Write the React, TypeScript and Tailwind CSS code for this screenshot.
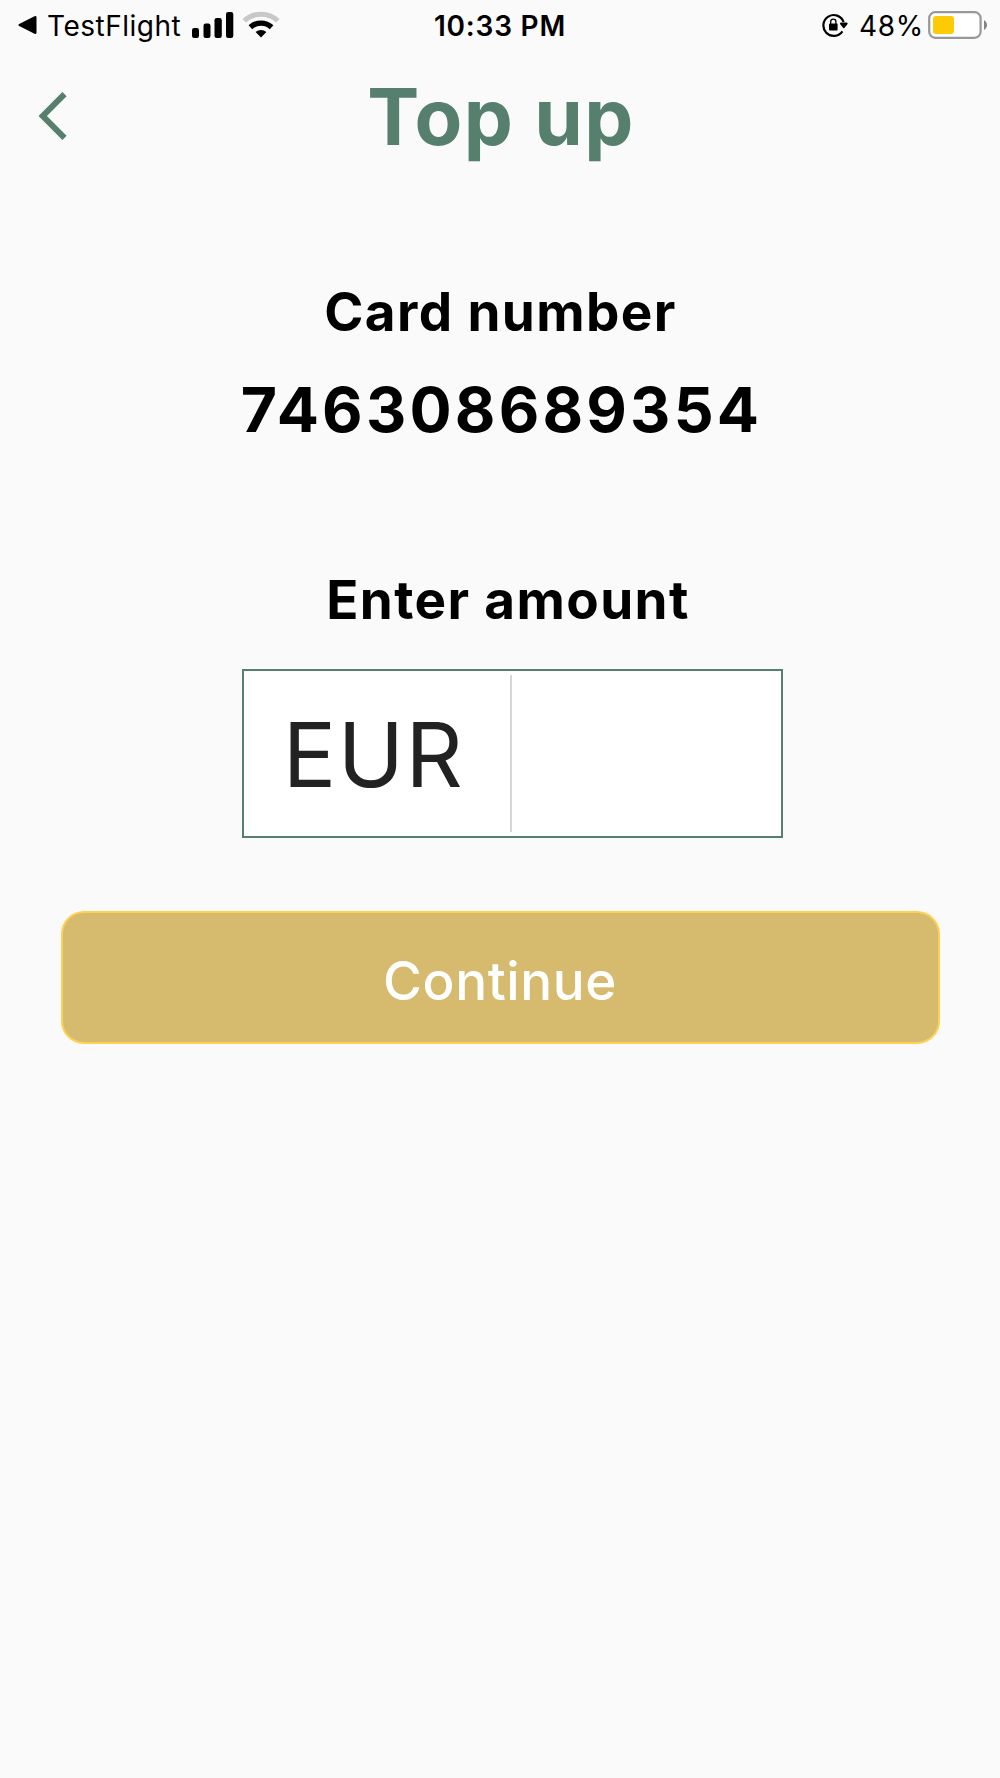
function SignalIcon() {
  return (
    <svg width="42" height="26" viewBox="0 0 42 26" className="ml-[11px]">
      <rect x="0" y="16" width="7" height="10" rx="2.2" />
      <rect x="11.5" y="11.5" width="7" height="14.5" rx="2.2" />
      <rect x="22.5" y="6" width="7.3" height="20" rx="2.2" />
      <rect x="34" y="0" width="7.3" height="26" rx="2.2" />
    </svg>
  );
}

function WifiIcon() {
  return (
    <svg width="38" height="28" viewBox="0 0 38 28" fill="none" className="ml-[8px]">
      <path d="M2.2 9.8C11.4 0.9 26.6 0.9 35.8 9.8" stroke="#c8c8c9" strokeWidth="5" />
      <path d="M8.4 16.2C14.3 10.8 23.7 10.8 29.6 16.2" stroke="#000" strokeWidth="5.4" />
      <path d="M13.6 21C16.8 18.2 21.2 18.2 24.4 21L19 26.6Z" fill="#000" />
    </svg>
  );
}

function RotationLockIcon() {
  return (
    <svg width="26" height="24" viewBox="0 0 26 24" fill="none">
      <path d="M20.4 18.3A10.4 10.4 0 1 1 21.6 9" stroke="#000" strokeWidth="2.2" />
      <path d="M19 10.6H24.6L21.8 14.2Z" fill="#000" stroke="#000" strokeWidth="2" strokeLinejoin="round" />
      <rect x="7" y="10.4" width="8.6" height="7.2" rx="1" fill="#000" />
      <path d="M8.7 11V8.7a2.6 2.6 0 0 1 5.2 0V11" stroke="#000" strokeWidth="1.3" />
    </svg>
  );
}

function BatteryIcon() {
  return (
    <svg width="60" height="28" viewBox="0 0 60 28" fill="none" className="ml-[4px]">
      <rect x="1.2" y="1.2" width="51.4" height="25.6" rx="6" fill="#fff" stroke="#989898" strokeWidth="2.2" />
      <rect x="5" y="5" width="21" height="18" rx="3" fill="#fdcb05" />
      <path d="M56 9C57.8 10.2 59 12 59 14S57.8 17.8 56 19Z" fill="#838383" />
    </svg>
  );
}

function StatusBar() {
  return (
    <div className="grid h-[50px] grid-cols-3 items-center text-[28px] leading-[30px]">
      <div className="flex items-center pl-[18px]">
        <svg width="19" height="18" viewBox="0 0 19 18">
          <path d="M1.2 8 16.5 0.3Q18.5 -0.4 18.5 1.5V16.5Q18.5 18.4 16.5 17.7L1.2 10Q-0.5 9 1.2 8Z" />
        </svg>
        <span className="ml-[10px] pt-px tracking-[0.5px]">TestFlight</span>
        <SignalIcon />
        <WifiIcon />
      </div>
      <span className="pt-px text-center font-semibold tracking-[0.8px]">10:33 PM</span>
      <div className="flex items-center justify-end pr-[12px]">
        <RotationLockIcon />
        <span className="ml-[11px] pt-px tracking-[0.7px]">48%</span>
        <BatteryIcon />
      </div>
    </div>
  );
}

function Header() {
  return (
    <header className="grid h-[132px] grid-cols-[100px_1fr_100px] items-center text-[#56806d]">
      <button className="pl-[39px]">
        <svg width="28" height="48" viewBox="0 0 28 48" fill="none" stroke="currentColor" strokeWidth="6">
          <path d="M25.5 2.1 3.8 24 25.5 45.9" />
        </svg>
      </button>
      <h1 className="pt-px pl-0.5 text-center text-[78px] leading-[80px] font-bold tracking-[1.4px]">Top up</h1>
    </header>
  );
}

export default function App() {
  return (
    <div className="h-[1778px] w-[1000px] bg-[#fafafa] font-['Inter',sans-serif] text-black">
      <StatusBar />
      <Header />
      <main className="text-center">
        <h2 className="mt-[100px] pl-px text-[53px] leading-[60px] font-[650] tracking-[1.4px]">Card number</h2>
        <p className="mt-[37px] pl-[3px] text-[62.5px] leading-[60px] font-[650] tracking-[3.2px]">746308689354</p>
        <h2 className="mt-[131px] pl-[16px] text-[53px] leading-[60px] font-[650] tracking-[1.4px]">Enter amount</h2>
        <div className="mt-[39px] ml-[242px] flex h-[169px] w-[541px] items-center border-2 border-[#56806d] bg-white">
          <span className="w-[266px] pt-0.5 pr-[7px] text-[89px] leading-none tracking-[1.5px] text-[#222]">EUR</span>
          <div className="h-[157px] w-[2px] bg-[#d6d6d6]" />
        </div>
        <button className="mx-auto mt-[73px] flex h-[133px] w-[879px] items-center justify-center rounded-[23px] border-[2.5px] border-[#ffd152] bg-[#d6ba6d] pt-2 text-[53px] font-medium tracking-[0.6px] text-white">
          Continue
        </button>
      </main>
    </div>
  );
}
